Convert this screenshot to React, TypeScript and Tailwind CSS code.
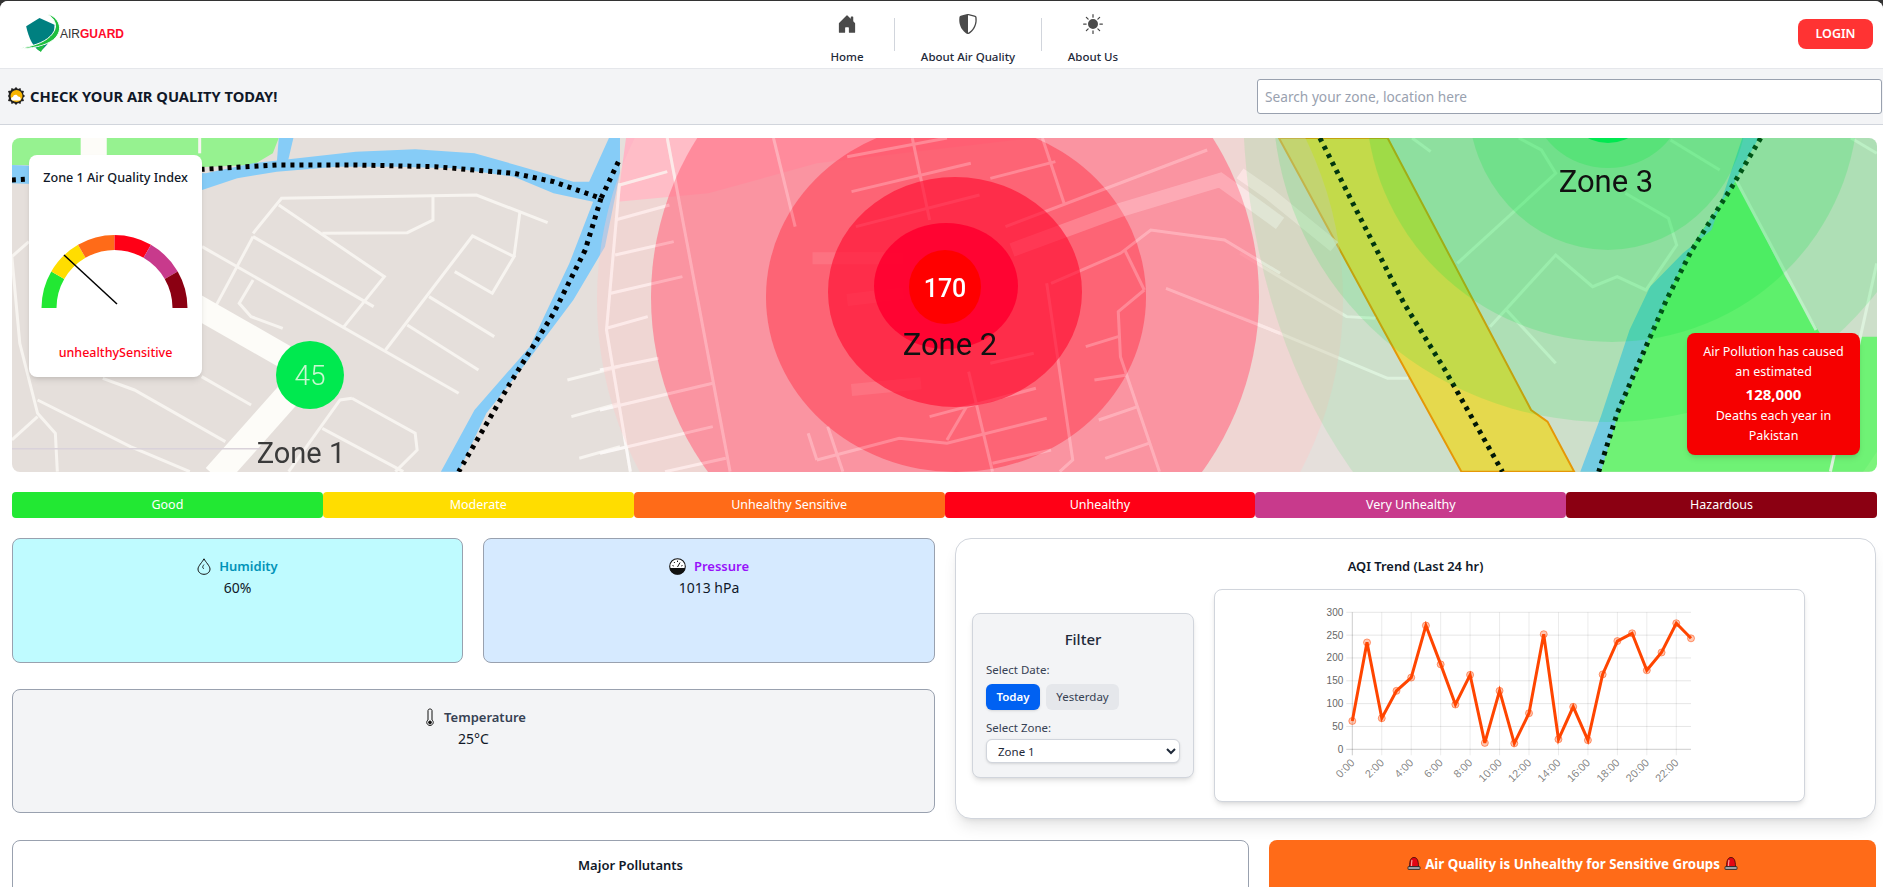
import { BsHouseDoorFill, BsShieldShaded, BsSunFill } from "react-icons/bs"

const FONT = "font-['Noto_Sans',sans-serif]"

// Roads are traced per map section, each group has its own scale
const roadsLeft = [
  "640,310 712,205 1205,195 1385,278",
  "1095,200 1095,270 1030,308 815,310",
  "705,225 972,440 870,590",
  "640,320 945,530",
  "640,320 545,530",
  "511,350 1160,790",
  "640,450 605,520 635,560 715,595",
  "975,660 1195,318 1300,380 1245,490 1150,425",
  "1315,245 1300,380",
  "1085,500 1250,620",
  "1030,585 1210,720",
  "260,745 340,780 570,935",
  "510,740 635,825",
  "73,335 30,380 50,640 95,850 140,910 145,1025",
  "95,810 330,950 480,1025",
  "95,860 30,930",
  "890,805 1050,910 1055,960 1000,1025",
  "890,805 860,810 730,1025",
  "815,895 1020,1025",
  "1435,750 1568,710",
  "1445,860 1568,820",
  "1465,985 1568,950",
  "505,24 505,70",
]

const roadsMiddle = [
  "155,24 300,1025",
  "45,160 15,600 70,1025",
  "45,165 155,125",
  "35,270 160,225",
  "35,375 170,335",
  "25,490 190,440",
  "15,595 110,560",
  "0,720 135,685",
  "0,840 260,760",
  "0,970 260,890",
  "150,1025 290,985",
  "400,24 450,290",
  "720,24 760,270",
  "1020,24 1070,220",
  "570,80 800,24",
  "580,185 855,100",
  "900,145 1050,95",
  "590,290 875,195",
  "935,290 1400,60",
  "1040,460 1200,370 1270,300 1440,330 1568,430",
  "1030,460 1090,990 1060,1025",
  "1255,480 1195,545 1200,680 1290,1025",
  "1210,360 1255,480",
  "1305,475 1568,610",
  "1120,650 1195,620",
  "1140,750 1215,735",
  "1150,870 1240,830",
  "1165,985 1265,940",
  "900,700 1000,670",
  "760,860 1005,775",
  "850,725 905,1025",
  "800,930 845,830",
  "500,990 480,910",
  "500,990 690,925 800,940 1030,865",
  "525,890 560,1025",
  "905,1000 1040,960",
]

const roadsRight = [
  "420,24 465,65",
  "680,24 735,60 770,130 530,400",
  "940,190 1045,265 1065,345 990,480 920,440 860,470 770,375 610,590",
  "1050,30 1170,120",
  "650,540 770,700",
  "0,370 260,560 330,565",
  "0,560 360,745 410,745",
  "1210,150 1405,600",
  "1490,24 1553,70",
  "1553,400 1440,1025",
]

function Lines({ items, color = "#f7f4f0", width = 3 }: { items: string[]; color?: string; width?: number }) {
  return (
    <>
      {items.map((p) => (
        <polyline key={p} points={p} fill="none" stroke={color} strokeWidth={width} vectorEffect="non-scaling-stroke" />
      ))}
    </>
  )
}

function MapDrawing() {
  const left = "translate(0,130) scale(0.3954,0.3333)"
  const mid = "translate(600,130) scale(0.4337,0.3333)"
  const right = "translate(1240,130) scale(0.41,0.3333)"
  const dots = { fill: "none", stroke: "#000", strokeWidth: 5, strokeDasharray: "4 5", vectorEffect: "non-scaling-stroke" as const }

  return (
    <svg viewBox="12 138 1865 334" width="1865" height="334" className="block blur-[0.4px]">
      <rect x="12" y="138" width="1865" height="334" fill="#e5dfdb" />

      <g transform={left}>
        <polygon points="30,24 705,24 690,70 640,105 500,112 30,105" fill="#96f290" />
        <polygon points="705,24 742,24 728,95 700,100" fill="#86ccf7" />
        <polygon points="30,105 520,130 640,100 900,65 1050,58 1200,70 1320,110 1450,155 1490,155 1540,24 1568,24 1568,130 1530,350 1450,510 1330,700 1230,850 1160,1025 1115,1025 1200,840 1340,650 1440,400 1500,215 1400,190 1300,140 1150,115 1000,110 850,110 700,125 600,145 511,180 30,160" fill="#86ccf7" />
        <polygon points="204,24 270,24 270,90 204,90" fill="#fdfcf8" />
        <Lines items={roadsLeft} />
        <polyline points="440,490 720,680" fill="none" stroke="#fdfcf8" strokeWidth="24" vectorEffect="non-scaling-stroke" />
        <polyline points="740,780 545,1040" fill="none" stroke="#fdfcf8" strokeWidth="26" vectorEffect="non-scaling-stroke" />
        <polyline points="30,956 660,956" fill="none" stroke="#d9d2da" strokeWidth="1.5" vectorEffect="non-scaling-stroke" />
        <polyline points="30,150 510,118 700,105 900,105 1100,110 1300,130 1400,155 1520,205 1568,85" {...dots} />
        <polyline points="1520,205 1480,360 1400,550 1290,760 1160,1025" {...dots} />
      </g>

      <g transform={mid}>
        <polygon points="60,24 1000,24 500,100 250,190 40,215" fill="#ffb6c6" />
        <Lines items={roadsMiddle} color="#fbf7f5" />
        <polyline points="950,360 1200,240 1430,150 1568,280" fill="none" stroke="#fff" strokeOpacity="0.6" strokeWidth="14" vectorEffect="non-scaling-stroke" />
      </g>

      <g transform={right}>
        <polygon points="1210,150 1330,440 1420,620 1568,620 1568,1025 880,1025 960,600 1090,370" fill="#7cf47c" />
        <polygon points="1225,24 1265,24 1200,170 1130,300 1090,380 1050,480 1000,620 920,860 880,1025 830,1025 880,860 950,600 1000,470 1080,370 1150,300" fill="#7fc9f5" />
        <polygon points="95,24 360,24 710,840 750,875 815,1025 540,1025 350,600" fill="#ffd850" stroke="#ff9000" strokeWidth="2" vectorEffect="non-scaling-stroke" />
        <Lines items={roadsRight} />
        <polyline points="0,130 70,190 230,350" fill="none" stroke="#fff" strokeOpacity="0.75" strokeWidth="12" vectorEffect="non-scaling-stroke" />
        <polyline points="195,24 300,280 400,520 500,720 640,1025" {...dots} />
        <polyline points="1270,24 1200,170 1100,365 1040,510 990,650 920,850 875,1025" {...dots} />
      </g>

      {/* zone 2 rings */}
      <ellipse cx="970" cy="300" rx="373" ry="370" fill="#ffc8c8" fillOpacity="0.4" />
      <ellipse cx="955" cy="297" rx="304" ry="300" fill="#ff7085" fillOpacity="0.65" />
      <ellipse cx="956" cy="297" rx="190" ry="175" fill="#ff344a" fillOpacity="0.5" />
      {/* roads still show through the rings */}
      <g transform={mid} opacity="0.22">
        <Lines items={roadsMiddle} color="#fff" />
        <polyline points="950,360 1200,240 1430,150 1568,280" fill="none" stroke="#fff" strokeOpacity="0.8" strokeWidth="14" vectorEffect="non-scaling-stroke" />
        <polyline points="490,385 700,385" fill="none" stroke="#fff" strokeOpacity="0.4" strokeWidth="12" vectorEffect="non-scaling-stroke" />
        <polyline points="570,510 700,490" fill="none" stroke="#fff" strokeOpacity="0.4" strokeWidth="12" vectorEffect="non-scaling-stroke" />
        <polyline points="580,780 740,760" fill="none" stroke="#fff" strokeOpacity="0.4" strokeWidth="12" vectorEffect="non-scaling-stroke" />
      </g>
      <ellipse cx="955" cy="292" rx="127" ry="115" fill="#ff082d" fillOpacity="0.6" />
      <ellipse cx="946" cy="286" rx="72" ry="63" fill="#ff0030" fillOpacity="0.9" />
      <ellipse cx="945" cy="287" rx="36" ry="37" fill="#ff0000" />

      {/* zone 3 rings */}
      <ellipse cx="1608" cy="100" rx="365" ry="520" fill="#00e63c" fillOpacity="0.1" />
      <ellipse cx="1608" cy="100" rx="335" ry="322" fill="#00e63c" fillOpacity="0.15" />
      <ellipse cx="1612" cy="100" rx="246" ry="242" fill="#00e63c" fillOpacity="0.18" />
      <ellipse cx="1608" cy="100" rx="140" ry="150" fill="#00e63c" fillOpacity="0.2" />
      <ellipse cx="1608" cy="100" rx="75" ry="68" fill="#00e63c" fillOpacity="0.22" />
      <circle cx="1608" cy="100" r="43" fill="#00e850" />

      {/* zone 1 point */}
      <circle cx="310" cy="375" r="34" fill="#00e94f" />

      <g fontFamily="Roboto, sans-serif">
        <text x="310" y="385" textAnchor="middle" fontSize="28" fontWeight="300" fill="#c8f8d0">45</text>
        <text x="945" y="297" textAnchor="middle" fontSize="25" fontWeight="500" fill="#fff">170</text>
        <text x="301" y="463" textAnchor="middle" fontSize="29" fill="#3a3a3a">Zone 1</text>
        <text x="950" y="355" textAnchor="middle" fontSize="31" fill="#111">Zone 2</text>
        <text x="1606" y="192" textAnchor="middle" fontSize="31" fill="#111">Zone 3</text>
      </g>
    </svg>
  )
}

const SEGMENTS = ["#22e833", "#ffdd00", "#ff6b18", "#ff0016", "#c83a8c", "#8b0012"]

function Gauge() {
  const cx = 85.5
  const cy = 122
  const pt = (r: number, deg: number) => {
    const a = (deg * Math.PI) / 180
    return `${(cx + r * Math.cos(a)).toFixed(2)} ${(cy - r * Math.sin(a)).toFixed(2)}`
  }
  return (
    <svg width="173" height="150" className="block">
      {SEGMENTS.map((c, i) => {
        const from = 180 - i * 30
        const to = from - 30
        return (
          <path
            key={c}
            d={`M${pt(73, from)} A73 73 0 0 1 ${pt(73, to)} L${pt(58, to)} A58 58 0 0 0 ${pt(58, from)}Z`}
            fill={c}
          />
        )
      })}
      <line x1="88" y1="118" x2="35" y2="69" stroke="#000" strokeWidth="1.5" />
    </svg>
  )
}

const AQI = [62, 234, 68, 128, 157, 271, 186, 98, 163, 14, 128, 13, 79, 252, 22, 93, 20, 164, 237, 254, 173, 212, 276, 243]

function TrendChart() {
  const x0 = 137.3
  const w = 338.7
  const top = 22.3
  const h = 137
  const px = (i: number) => x0 + (i * w) / 23
  const py = (v: number) => top + h - (v / 300) * h
  const line = AQI.map((v, i) => `${px(i).toFixed(1)},${py(v).toFixed(1)}`).join(" ")

  return (
    <svg width="589" height="211" className="block" fontFamily="'Liberation Sans', sans-serif" fontSize="10" fill="#666">
      {[0, 50, 100, 150, 200, 250, 300].map((v) => (
        <g key={v}>
          <line x1={x0 - 6} x2={x0 + w} y1={py(v)} y2={py(v)} stroke="#000" strokeOpacity={v === 0 ? 0.2 : 0.1} />
          <text x={x0 - 9} y={py(v) + 3.5} textAnchor="end">{v}</text>
        </g>
      ))}
      {AQI.map((_, i) =>
        i % 2 === 0 ? (
          <line key={i} x1={px(i)} x2={px(i)} y1={top} y2={top + h + 6} stroke="#000" strokeOpacity={i === 0 ? 0.2 : 0.08} />
        ) : null,
      )}
      {AQI.map((_, i) =>
        i % 2 === 0 ? (
          <text key={i} x={px(i) + 3} y={top + h + 14} fontSize="11" textAnchor="end" transform={`rotate(-45 ${px(i) + 3} ${top + h + 14})`} fillOpacity="0.8">
            {i}:00
          </text>
        ) : null,
      )}
      <polyline points={line} fill="none" stroke="#ff4500" strokeWidth="3" />
      {AQI.map((v, i) => (
        <circle key={i} cx={px(i)} cy={py(v)} r="3.5" fill="#ff4500" fillOpacity="0.3" stroke="#ff4500" strokeOpacity="0.5" />
      ))}
    </svg>
  )
}

function Logo() {
  return (
    <div className="flex items-center">
      <svg width="46" height="40" viewBox="55 43 135 120" className="block">
        <path d="M78 80 L118 55 L163 75 C165 105 145 135 120 155 C100 145 85 115 78 80Z" fill="#008080" />
        <path d="M140 43 C175 50 195 90 160 120 C135 140 90 147 55 147 C95 140 130 130 150 110 C175 85 170 60 140 43Z" fill="#1fbf3f" stroke="#fff" strokeWidth="3" />
        <path d="M108 145 L135 135 L122 157Z" fill="#1fbf3f" />
      </svg>
      <span className="ml-[-4px] text-[12px] leading-none font-['Liberation_Sans',sans-serif] text-[#333]">
        AIR<span className="font-bold text-[#ff0a2a]">GUARD</span>
      </span>
    </div>
  )
}

function SunCloud() {
  return (
    <svg width="17" height="18" viewBox="0 0 17 18" className="block shrink-0">
      <polygon points="8,0 10,2 12.5,1 13,3.5 16,4 15,7 17,9 15,11 16,14 13,14.5 12.5,17 10,16 8,18 6,16 3.5,17 3,14.5 0,14 1,11 0,9 1,7 0,4 3,3.5 3.5,1 6,2" fill="#222" />
      <circle cx="8.5" cy="9" r="6" fill="#f8b500" />
      <path d="M5 13.5 C2.5 13.5 2.5 10 5 10 C5.5 7.5 9 7 10 9.5 C13 9 14 13.5 11 13.5Z" fill="#fff" />
    </svg>
  )
}

function Siren() {
  return (
    <svg width="14" height="13" viewBox="0 0 14 13" className="block shrink-0">
      <path d="M2.5 10 C2.5 3 4 .5 7 .5 C10 .5 11.5 3 11.5 10Z" fill="#e30613" stroke="#3a0a0a" strokeWidth="0.8" />
      <path d="M5 3 C4.5 5 4.5 7 4.5 9" stroke="#ff9a9a" strokeWidth="1.2" fill="none" />
      <rect x="1" y="9.5" width="12" height="3" rx="0.6" fill="#9aa0a6" stroke="#222" strokeWidth="0.8" />
    </svg>
  )
}

function DropIcon() {
  return (
    <svg width="14" height="17" viewBox="0 0 14 17" className="block" fill="none" stroke="#111" strokeWidth="1">
      <path d="M7 .8 C5.5 4 1 8 1 11 C1 14.2 3.7 16.3 7 16.3 C10.3 16.3 13 14.2 13 11 C13 8 8.5 4 7 .8Z" />
      <path d="M7 6.5 C6.4 7.5 5.6 8.3 5.6 9.2 C5.6 10 6.2 10.5 7 10.5" strokeWidth="0.8" />
    </svg>
  )
}

function PressureIcon() {
  return (
    <svg width="17" height="17" viewBox="0 0 17 17" className="block">
      <circle cx="8.5" cy="8.5" r="7.8" fill="#fff" stroke="#111" strokeWidth="1.1" />
      <path d="M.8 10 H16.2 A7.8 7.8 0 0 1 .8 10Z" fill="#111" />
      <path d="M8.5 9 L11 4.5 M3.5 7.5 L4.8 8 M5 4 L5.8 5 M8.5 2.6 V4 M13.5 7.5 L12.2 8" stroke="#111" strokeWidth="1" />
    </svg>
  )
}

function ThermoIcon() {
  return (
    <svg width="10" height="18" viewBox="0 0 10 18" className="block" fill="none" stroke="#111" strokeWidth="1">
      <path d="M3 12 V2.5 C3 .5 7 .5 7 2.5 V12 C9.5 13.8 8 17.4 5 17.4 C2 17.4 .5 13.8 3 12Z" />
      <circle cx="5" cy="14.4" r="1.4" fill="#111" />
    </svg>
  )
}

function StatCard({ title, value, tone, titleColor, icon, gap }: { title: string; value: string; tone: string; titleColor: string; icon: React.ReactNode; gap: string }) {
  return (
    <div className={`h-full rounded-lg border border-gray-400 pt-[17px] text-center ${tone}`}>
      <div className={`flex items-center justify-center ${gap}`}>
        {icon}
        <span className={`text-[13px] font-semibold leading-5 ${titleColor}`}>{title}</span>
      </div>
      <div className="text-[14px] leading-5 text-gray-900 mt-[2px]">{value}</div>
    </div>
  )
}

export default function App() {
  return (
    <div className={`h-[887px] overflow-hidden bg-[#333] pt-px ${FONT}`}>
      <div className="h-full overflow-hidden rounded-t-lg bg-white">
        {/* top nav */}
        <header className="flex h-[68px] items-start justify-between border-b border-gray-200 bg-white">
          <div className="pl-[18px] pt-[13px] w-[800px]">
            <Logo />
          </div>
          <nav className="flex items-start text-[11.5px] leading-4 text-gray-800 font-medium">
            <a className="flex w-[94px] flex-col items-center pt-[13px]">
              <BsHouseDoorFill className="h-5 w-5 text-[#4a4a4a]" />
              <span className="mt-[15px]">Home</span>
            </a>
            <div className="mt-[17px] h-[33px] w-px bg-gray-300" />
            <a className="flex w-[146px] flex-col items-center pt-[13px]">
              <BsShieldShaded className="h-5 w-5 text-[#4a4a4a]" />
              <span className="mt-[15px]">About Air Quality</span>
            </a>
            <div className="mt-[17px] h-[33px] w-px bg-gray-300" />
            <a className="flex w-[102px] flex-col items-center pt-[13px]">
              <BsSunFill className="h-5 w-5 text-[#4a4a4a]" />
              <span className="mt-[15px]">About Us</span>
            </a>
          </nav>
          <div className="flex flex-1 justify-end pr-[10px] pt-[18px]">
            <button className="h-[30px] w-[75px] rounded-lg bg-[#ff3333] text-[12.5px] font-semibold text-white">LOGIN</button>
          </div>
        </header>

        {/* search bar */}
        <div className="flex h-[56px] items-center justify-between border-b border-gray-300 bg-gray-100 pl-2 pr-px">
          <div className="flex items-center gap-[5px]">
            <SunCloud />
            <h2 className="text-[14.7px] font-bold text-gray-900">CHECK YOUR AIR QUALITY TODAY!</h2>
          </div>
          <input
            placeholder="Search your zone, location here"
            className="h-[35px] w-[625px] rounded-[3px] border border-gray-400 bg-white px-[7px] text-[13.7px] placeholder:text-gray-400"
          />
        </div>

        <main className="pl-3 pr-[6px] pt-[13px]">
          {/* map */}
          <section className="relative h-[334px] overflow-hidden rounded-lg">
            <MapDrawing />
            <div className="absolute left-[17px] top-[17px] h-[222px] w-[173px] rounded-lg bg-white pt-[15px] text-center shadow-md">
              <h3 className="text-[12.6px] font-medium leading-4 text-gray-900">Zone 1 Air Quality Index</h3>
              <Gauge />
              <p className="mt-[9px] text-[12.5px] font-medium leading-4 text-[#ff0016]">unhealthySensitive</p>
            </div>
            <div className="absolute left-[1675px] top-[195px] h-[122px] w-[173px] rounded-lg bg-[#f60000] pt-[9px] text-center text-[12.5px] leading-5 text-white shadow-md">
              <p>Air Pollution has caused</p>
              <p>an estimated</p>
              <p className="text-[15px] font-bold leading-[24px]">128,000</p>
              <p>Deaths each year in</p>
              <p>Pakistan</p>
            </div>
          </section>

          {/* legend */}
          <div className="mt-5 grid h-[26px] grid-cols-6 text-center text-[12.5px] leading-[26px] text-white">
            <div className="rounded-sm bg-[#22e833]">Good</div>
            <div className="rounded-sm bg-[#ffdd00]">Moderate</div>
            <div className="rounded-sm bg-[#ff6b18]">Unhealthy Sensitive</div>
            <div className="rounded-sm bg-[#ff0016]">Unhealthy</div>
            <div className="rounded-sm bg-[#c83a8c]">Very Unhealthy</div>
            <div className="rounded-sm bg-[#8b0012]">Hazardous</div>
          </div>

          <div className="mt-5 grid h-[281px] grid-cols-[923px_921px] gap-x-5">
            <div className="grid grid-cols-[451px_452px] grid-rows-[125px_124px] gap-x-5 gap-y-[26px]">
              <StatCard title="Humidity" value="60%" tone="bg-[#bffbff]" titleColor="text-cyan-600" icon={<DropIcon />} gap="gap-2" />
              <StatCard title="Pressure" value="1013 hPa" tone="bg-[#d6eaff]" titleColor="text-purple-600" icon={<PressureIcon />} gap="gap-2" />
              <div className="col-span-2">
                <StatCard title="Temperature" value="25°C" tone="bg-gray-100" titleColor="text-gray-700" icon={<ThermoIcon />} gap="gap-[9px] pl-1" />
              </div>
            </div>

            <div className="rounded-2xl border border-gray-300 bg-white pl-4 shadow-lg">
              <h3 className="-ml-4 pt-[17px] text-center text-[12.9px] font-semibold leading-[20px] text-gray-900">AQI Trend (Last 24 hr)</h3>
              <div className="mt-[13px] flex items-center gap-5">
                <div className="h-[165px] w-[222px] rounded-lg border border-gray-300 bg-gray-100 px-[13px] pt-[15px] shadow-md">
                  <h4 className="text-center text-[15px] font-medium leading-5 text-gray-800">Filter</h4>
                  <p className="mt-[13px] text-[11.5px] leading-4 text-gray-700">Select Date:</p>
                  <div className="mt-[6px] flex gap-[6px]">
                    <button className="h-[26px] w-[54px] rounded-md bg-[#0061f2] text-[11.5px] font-semibold text-white shadow-sm">Today</button>
                    <button className="h-[26px] w-[73px] rounded-md bg-gray-200 text-[11.5px] text-gray-700">Yesterday</button>
                  </div>
                  <p className="mt-[10px] text-[11.5px] leading-4 text-gray-700">Select Zone:</p>
                  <select className="mt-[3px] h-[24px] w-[194px] rounded-md border border-gray-300 bg-white pl-[7px] text-[11.5px] text-gray-800 shadow-sm">
                    <option>Zone 1</option>
                  </select>
                </div>
                <div className="h-[213px] w-[591px] rounded-lg border border-gray-300 bg-white shadow-md">
                  <TrendChart />
                </div>
              </div>
            </div>
          </div>

          <div className="mt-[21px] grid grid-cols-[1237px_607px] gap-x-5">
            <div className="h-[200px] rounded-lg border border-gray-400 bg-white pt-[14px] text-center text-[13px] font-semibold leading-5 text-gray-900">
              Major Pollutants
            </div>
            <div className="flex h-[200px] items-start justify-center gap-1 rounded-lg bg-[#ff6b18] pt-[14px] text-[13.3px] font-bold leading-5 text-white">
              <span className="mt-[3px]"><Siren /></span>
              Air Quality is Unhealthy for Sensitive Groups
              <span className="mt-[3px]"><Siren /></span>
            </div>
          </div>
        </main>
      </div>
    </div>
  )
}
